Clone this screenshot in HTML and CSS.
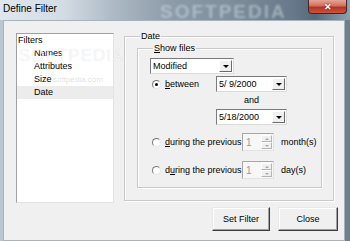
FILE: index.html
```html
<!DOCTYPE html>
<html lang="en">
<head>
    <meta charset="UTF-8">
    <title>Define Filter</title>
    <link rel="stylesheet" href="styles.css">
</head>
<body>
    <div class="window">
        <div class="titlebar">
            <span class="title">Define Filter</span>
            <span class="glass-mark">SOFTPEDIA</span>
            <button class="close-btn">&#x2715;</button>
        </div>

        <div class="client">
            <div class="main">
                <div class="listbox">
                    <div class="item">Filters</div>
                    <div class="item sub">Names</div>
                    <div class="item sub">Attributes</div>
                    <div class="item sub">Size</div>
                    <div class="item sub selected">Date</div>
                </div>

                <fieldset class="group date-group">
                    <legend>Date</legend>
                    <fieldset class="group show-group">
                        <legend><u>S</u>how files</legend>

                        <div class="combo">
                            <span class="combo-text">Modified</span>
                            <span class="drop-btn"><span class="arrow"></span></span>
                        </div>

                        <div class="opt-row between-row">
                            <span class="radio checked"></span>
                            <span class="opt-label between-label"><u>b</u>etween</span>
                            <div class="picker">
                                <span class="picker-text">5/&nbsp;9/2000</span>
                                <span class="drop-btn"><span class="arrow"></span></span>
                            </div>
                        </div>
                        <div class="and-row">and</div>
                        <div class="picker picker-two">
                            <span class="picker-text">5/18/2000</span>
                            <span class="drop-btn"><span class="arrow"></span></span>
                        </div>

                        <div class="opt-row during-row first">
                            <span class="radio"></span>
                            <span class="opt-label during-label"><u>d</u>uring the previous</span>
                            <div class="spin">
                                <span class="spin-text">1</span>
                                <span class="spin-btns">
                                    <span class="spin-up"></span>
                                    <span class="spin-down"></span>
                                </span>
                            </div>
                            <span class="unit">month(s)</span>
                        </div>

                        <div class="opt-row during-row second">
                            <span class="radio"></span>
                            <span class="opt-label during-label">d<u>u</u>ring the previous</span>
                            <div class="spin">
                                <span class="spin-text">1</span>
                                <span class="spin-btns">
                                    <span class="spin-up"></span>
                                    <span class="spin-down"></span>
                                </span>
                            </div>
                            <span class="unit">day(s)</span>
                        </div>
                    </fieldset>
                </fieldset>
            </div>

            <div class="buttons">
                <button class="btn set-btn">Set Filter</button>
                <button class="btn close-dlg">Close</button>
            </div>

            <span class="watermark">SOFTPEDIA</span>
            <span class="watermark-url">softpedia.com</span>
        </div>
    </div>
</body>
</html>
```

FILE: styles.css
```css
body {
    margin: 0;
    font-family: "Liberation Sans", Arial, sans-serif;
    font-size: 9px;
    color: #000;
}

.window {
    width: 350px;
    height: 241px;
    display: flex;
    flex-direction: column;
    background: linear-gradient(90deg, #b9c7d3 0, #9fb0be 60%, #6e7f8c 100%);
    overflow: hidden;
}

/* title bar, blurred glass look */
.titlebar {
    height: 21px;
    display: flex;
    align-items: flex-start;
    position: relative;
    background: linear-gradient(90deg, #dfe6ec 0, #d4dce3 18%, #aebbc6 32%, #8d9caa 48%, #7e8e9b 66%, #66788a 84%, #56687a 90%, #8fa2b1 100%);
}

.title {
    padding: 3px 0 0 3px;
    font-size: 10px;
    line-height: 12px;
}

.glass-mark {
    position: absolute;
    left: 160px;
    top: 1px;
    font-size: 19px;
    font-weight: bold;
    letter-spacing: 2px;
    color: rgba(220, 230, 238, 0.45);
    filter: blur(1.2px);
}

.close-btn {
    margin-left: auto;
    margin-right: 3px;
    width: 39px;
    height: 14px;
    padding: 0;
    border: 1px solid #4a2420;
    border-top: none;
    border-radius: 0 0 4px 4px;
    background: linear-gradient(180deg, #e5a497 0, #d0705f 45%, #b8321f 55%, #c9553e 100%);
    color: #fff;
    font-size: 9px;
    font-weight: bold;
    line-height: 12px;
    text-shadow: 0 0 2px #5a1a10;
}

/* client area */
.client {
    position: relative;
    height: 215px;
    margin: 0 5px 0 3px;
    border: 1px solid #a7b3bd;
    background: #f0f0f0;
    padding: 10px 0 0 12px;
}

.main {
    display: flex;
    gap: 10px;
}

.listbox {
    margin-top: 2px;
    width: 96px;
    height: 168px;
    border: 1px solid #a0a0a0;
    border-right-color: #e3e3e3;
    border-bottom-color: #e3e3e3;
    background: #fff;
}

.item {
    height: 13px;
    line-height: 13px;
    padding-left: 1px;
}

.item.sub {
    padding-left: 17px;
}

.item.selected {
    background: #ececec;
}

/* group boxes */
.group {
    margin: 0;
    border: 1px solid #c9c9c9;
    box-shadow: inset 1px 1px 0 #fff, 1px 1px 0 #fff;
}

.group legend {
    padding: 0 1px;
    margin-left: 3px;
    line-height: 11px;
}

.date-group {
    width: 210px;
    height: 170px;
    box-sizing: border-box;
    padding: 1px 11px 12px 12px;
}

.show-group {
    height: 145px;
    box-sizing: border-box;
    padding: 4px 0 0 12px;
}

/* combo and date pickers */
.combo,
.picker {
    height: 16px;
    box-sizing: border-box;
    display: flex;
    align-items: center;
    background: #fff;
    border: 1px solid #7a7a7a;
    border-right-color: #dcdcdc;
    border-bottom-color: #dcdcdc;
}

.combo {
    width: 84px;
}

.combo-text,
.picker-text {
    flex: 1;
    padding-left: 2px;
    line-height: 14px;
}

.picker {
    width: 71px;
}

.drop-btn {
    width: 13px;
    height: 12px;
    margin-right: 1px;
    box-sizing: border-box;
    display: flex;
    align-items: center;
    justify-content: center;
    background: #f0f0f0;
    border: 1px solid;
    border-color: #fff #6a6a6a #6a6a6a #fff;
}

.arrow {
    width: 0;
    height: 0;
    border-left: 3px solid transparent;
    border-right: 3px solid transparent;
    border-top: 3px solid #000;
}

/* option rows */
.opt-row {
    display: flex;
    align-items: center;
}

.radio {
    width: 9px;
    height: 9px;
    box-sizing: border-box;
    margin-left: 2px;
    border: 1px solid;
    border-color: #7a7a7a #e6e6e6 #e6e6e6 #7a7a7a;
    border-radius: 50%;
    background: #fff;
    display: flex;
    align-items: center;
    justify-content: center;
}

.radio.checked::after {
    content: "";
    width: 3px;
    height: 3px;
    border-radius: 50%;
    background: #000;
}

.opt-label {
    margin-left: 4px;
}

.between-row {
    height: 16px;
    margin-top: 2px;
}

.between-label {
    width: 51px;
}

.and-row {
    height: 17px;
    line-height: 17px;
    width: 71px;
    margin-left: 66px;
    text-align: center;
}

.picker-two {
    margin-left: 66px;
}

.during-row {
    height: 18px;
}

.during-row.first {
    margin-top: 8px;
}

.during-row.second {
    margin-top: 10px;
}

.during-label {
    width: 77px;
}

.spin {
    width: 32px;
    height: 18px;
    box-sizing: border-box;
    display: flex;
    align-items: center;
    background: #f7f7f7;
    border: 1px solid #a8a8a8;
    border-right-color: #e2e2e2;
    border-bottom-color: #e2e2e2;
}

.spin-text {
    flex: 1;
    padding-left: 3px;
    color: #9a9a9a;
    font-size: 10px;
}

.spin-btns {
    width: 11px;
    height: 14px;
    margin-right: 1px;
    display: flex;
    flex-direction: column;
}

.spin-up,
.spin-down {
    flex: 1;
    display: flex;
    align-items: center;
    justify-content: center;
    background: #f0f0f0;
    border: 1px solid;
    border-color: #fff #b4b4b4 #b4b4b4 #fff;
}

.spin-up::after {
    content: "";
    border-left: 2px solid transparent;
    border-right: 2px solid transparent;
    border-bottom: 2px solid #a8a8a8;
}

.spin-down::after {
    content: "";
    border-left: 2px solid transparent;
    border-right: 2px solid transparent;
    border-top: 2px solid #a8a8a8;
}

.unit {
    margin-left: 7px;
}

/* dialog buttons */
.buttons {
    display: flex;
    justify-content: flex-end;
    gap: 8px;
    margin-top: 4px;
    padding-right: 6px;
}

.btn {
    height: 24px;
    padding: 0;
    font-family: "Liberation Sans", Arial, sans-serif;
    font-size: 9px;
    color: #000;
    background: #f0f0f0;
    border: 1px solid;
    border-color: #e8e8e8 #3c3c3c #3c3c3c #e8e8e8;
    box-shadow: inset -1px -1px 0 #a0a0a0, inset 1px 1px 0 #fff;
}

.set-btn {
    width: 58px;
}

.close-dlg {
    width: 60px;
}

/* faint site watermark over the dialog */
.watermark {
    position: absolute;
    left: 15px;
    top: 25px;
    font-size: 17px;
    letter-spacing: 1px;
    color: rgba(255, 255, 255, 0.7);
    text-shadow: 0 0 1px rgba(0, 0, 0, 0.12);
}

.watermark-url {
    position: absolute;
    left: 49px;
    top: 54px;
    font-size: 8px;
    color: rgba(160, 160, 160, 0.35);
}
```
